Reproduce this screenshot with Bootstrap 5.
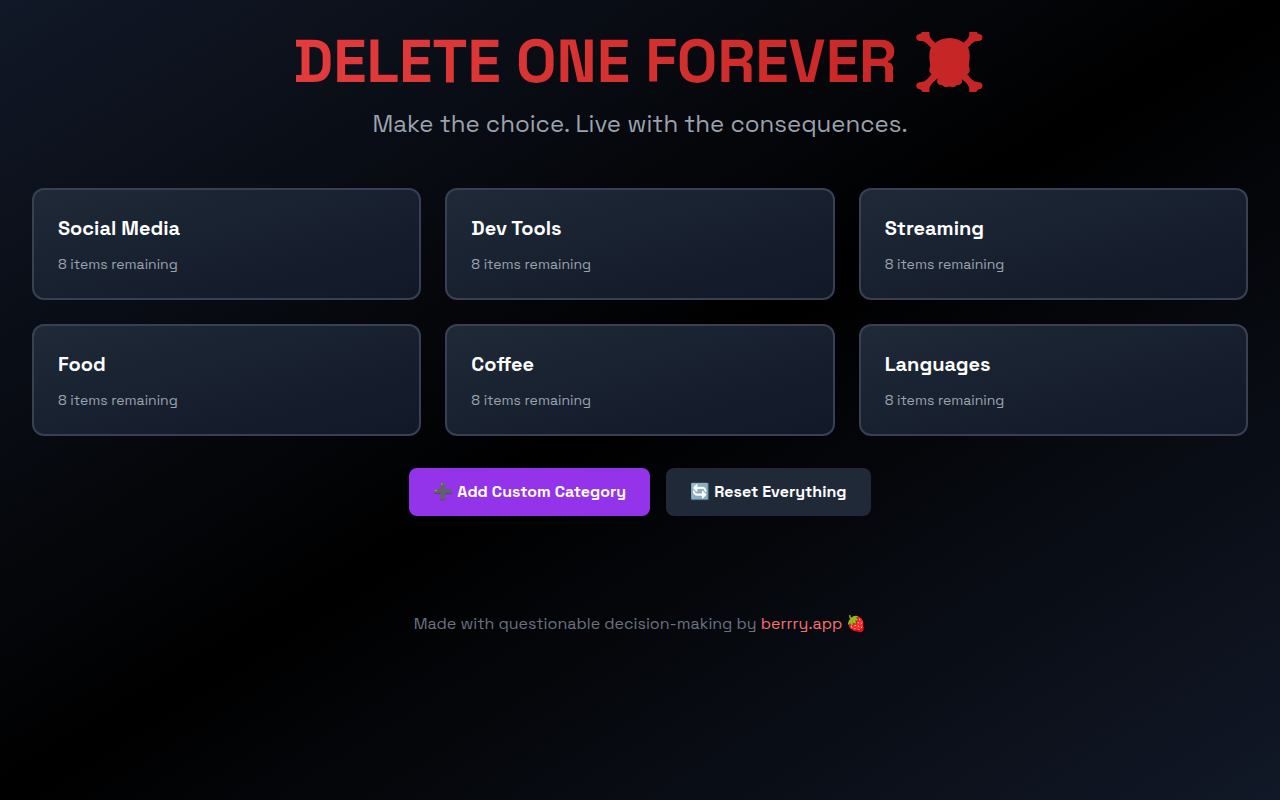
<!DOCTYPE html>
<html lang="en">
<head>
<meta charset="utf-8">
<meta name="viewport" content="width=device-width, initial-scale=1">
<title>Delete One Forever</title>
<link href="https://cdn.jsdelivr.net/npm/bootstrap@5.3.0/dist/css/bootstrap.min.css" rel="stylesheet">
<style>
  body {
    font-family: "Space Grotesk", "Noto Color Emoji", sans-serif;
    color: #fff;
    background: linear-gradient(to bottom right, #111827, #000, #111827);
  }
  .page-shell { max-width: 1280px; padding: 32px; }
  .page-title {
    font-size: 60px;
    line-height: 1;
    background: linear-gradient(to right, #ef4444, #b91c1c);
    -webkit-background-clip: text;
    background-clip: text;
    color: transparent;
  }
  .tagline { font-size: 24px; line-height: 32px; color: #9ca3af; }
  .category {
    padding: 24px;
    border: 2px solid #374151;
    border-radius: 12px;
    background: linear-gradient(to bottom right, #1f2937, #111827);
    color: #fff;
  }
  .category:hover { border-color: #ef4444; }
  .category-name { font-size: 20px; line-height: 28px; margin-bottom: 12px; }
  .category-count { font-size: 14px; line-height: 20px; color: #9ca3af; }
  .action {
    --bs-btn-padding-x: 24px;
    --bs-btn-padding-y: 12px;
    --bs-btn-border-width: 0;
    --bs-btn-border-radius: 8px;
    --bs-btn-color: #fff;
    --bs-btn-hover-color: #fff;
    --bs-btn-font-weight: 700;
  }
  .action-add { --bs-btn-bg: #9333ea; --bs-btn-hover-bg: #7e22ce; }
  .action-reset { --bs-btn-bg: #1f2937; --bs-btn-hover-bg: #374151; }
  .page-footer { margin-top: 96px; color: #6b7280; }
  .page-footer a { color: #f87171; }
</style>
</head>
<body class="min-vh-100">
<div class="page-shell container-fluid">
  <header class="text-center mb-5">
    <h1 class="page-title fw-bold mb-3">DELETE ONE FOREVER ☠️</h1>
    <p class="tagline mb-0">Make the choice. Live with the consequences.</p>
  </header>

  <main>
    <div class="row g-4 mb-4 pb-2">
      <div class="col-12 col-md-4"><div class="card category">
        <h2 class="category-name fw-bold"><a href="#social" class="stretched-link text-reset text-decoration-none">Social Media</a></h2>
        <p class="category-count mb-0">8 items remaining</p>
      </div></div>
      <div class="col-12 col-md-4"><div class="card category">
        <h2 class="category-name fw-bold"><a href="#dev" class="stretched-link text-reset text-decoration-none">Dev Tools</a></h2>
        <p class="category-count mb-0">8 items remaining</p>
      </div></div>
      <div class="col-12 col-md-4"><div class="card category">
        <h2 class="category-name fw-bold"><a href="#streaming" class="stretched-link text-reset text-decoration-none">Streaming</a></h2>
        <p class="category-count mb-0">8 items remaining</p>
      </div></div>
      <div class="col-12 col-md-4"><div class="card category">
        <h2 class="category-name fw-bold"><a href="#food" class="stretched-link text-reset text-decoration-none">Food</a></h2>
        <p class="category-count mb-0">8 items remaining</p>
      </div></div>
      <div class="col-12 col-md-4"><div class="card category">
        <h2 class="category-name fw-bold"><a href="#coffee" class="stretched-link text-reset text-decoration-none">Coffee</a></h2>
        <p class="category-count mb-0">8 items remaining</p>
      </div></div>
      <div class="col-12 col-md-4"><div class="card category">
        <h2 class="category-name fw-bold"><a href="#languages" class="stretched-link text-reset text-decoration-none">Languages</a></h2>
        <p class="category-count mb-0">8 items remaining</p>
      </div></div>
    </div>

    <div class="d-flex flex-wrap justify-content-center gap-3">
      <button type="button" class="btn action action-add">➕ Add Custom Category</button>
      <button type="button" class="btn action action-reset">🔄 Reset Everything</button>
    </div>
  </main>

  <footer class="page-footer text-center">
    <p class="mb-0">Made with questionable decision-making by <a href="https://berrry.app" class="text-decoration-none">berrry.app</a> 🍓</p>
  </footer>
</div>
<script src="https://cdn.jsdelivr.net/npm/bootstrap@5.3.0/dist/js/bootstrap.bundle.min.js"></script>
</body>
</html>
